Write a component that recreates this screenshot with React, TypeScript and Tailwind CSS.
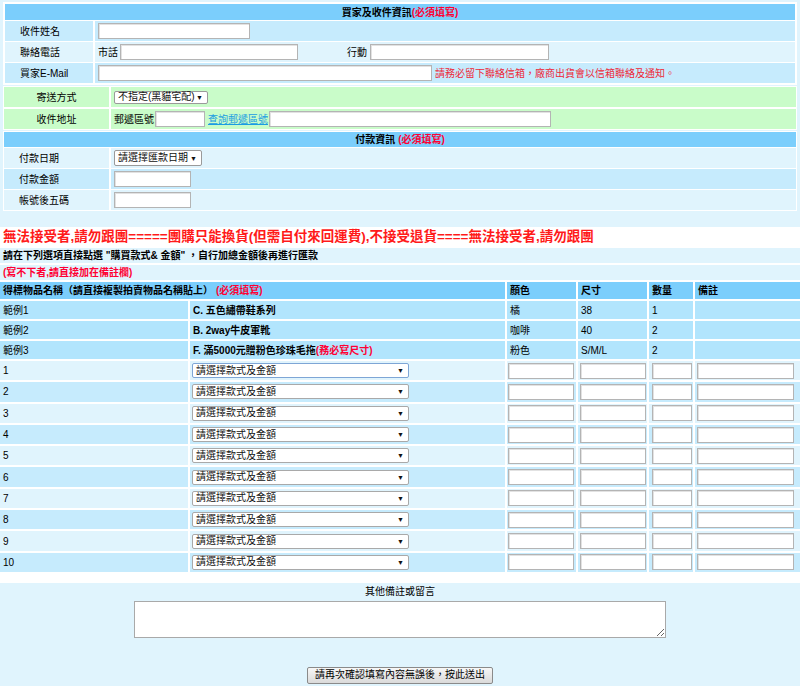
import clsx from 'clsx'
import type { ReactNode } from 'react'

const RED = 'text-[#ff0033]'

function Field({ className }: { className?: string }) {
  return (
    <input
      type="text"
      className={clsx('h-[16px] border border-[#b4b4b4] bg-white shadow-[inset_1px_1px_0_#e2e2e2] outline-none', className)}
    />
  )
}

function Pick({ label, className }: { label: string; className?: string }) {
  return (
    <div
      className={clsx(
        'flex items-center justify-between rounded-[2px] border bg-white pl-[3px] pr-[4px] text-[10px] leading-none text-[#111]',
        className,
      )}
    >
      <span>{label}</span>
      <span className="text-[7px]">▼</span>
    </div>
  )
}

function Row({
  label,
  dark,
  wide,
  center,
  green,
  children,
}: {
  label: string
  dark?: boolean
  wide?: boolean
  center?: boolean
  green?: boolean
  children?: ReactNode
}) {
  const bg = green ? 'bg-[#c9fcc9]' : dark ? 'bg-[#c6ebfd]' : 'bg-[#e0f4fd]'
  return (
    <div className={clsx('grid h-[20px] gap-x-[2px]', wide ? 'grid-cols-[105px_1fr]' : 'grid-cols-[88px_1fr]')}>
      <div className={clsx('flex items-center', bg, center ? 'justify-center' : 'pl-[15px]')}>{label}</div>
      <div className={clsx('flex items-center pl-[3px]', bg)}>{children}</div>
    </div>
  )
}

const examples = [
  { no: '範例1', name: 'C. 五色繡帶鞋系列', color: '橘', size: '38', qty: '1' },
  { no: '範例2', name: 'B. 2way牛皮軍靴', color: '咖啡', size: '40', qty: '2' },
  { no: '範例3', name: 'F. 滿5000元贈粉色珍珠毛拖', color: '粉色', size: 'S/M/L', qty: '2', warn: '(務必寫尺寸)' },
]

export default function App() {
  return (
    <div className="min-h-[686px] bg-white font-['Liberation_Sans','Noto_Sans_CJK_TC',sans-serif] text-[10px] text-black">
      {/* buyer / shipping / payment */}
      <div className="bg-[#e0f4fd] px-[3px] pb-[16px] pt-[2px]">
        <div className="flex flex-col gap-[1px] bg-white p-[2px]">
          <div className="flex h-[16px] items-center justify-center bg-[#7bcefc] font-bold">
            買家及收件資訊<span className={RED}>(必須填寫)</span>
          </div>
          <Row label="收件姓名" dark>
            <Field className="w-[152px]" />
          </Row>
          <Row label="聯絡電話">
            <span>市話</span>
            <Field className="ml-[2px] w-[178px]" />
            <span className="ml-[49px]">行動</span>
            <Field className="ml-[3px] w-[179px]" />
          </Row>
          <Row label="買家E-Mail" dark>
            <Field className="w-[334px]" />
            <span className="ml-[3px] text-[#ee2838]">請務必留下聯絡信箱，廠商出貨會以信箱聯絡及通知。</span>
          </Row>
        </div>

        <div className="mt-[1px] flex flex-col gap-[2px] bg-white p-[1px]">
          <Row label="寄送方式" wide center green>
            <Pick label="不指定(黑貓宅配)" className="h-[13px] w-[94px] border-[#9a9a9a]" />
          </Row>
          <Row label="收件地址" wide center green>
            <span>郵遞區號</span>
            <Field className="ml-[1px] w-[50px]" />
            <a href="#" className="ml-[3px] text-[#1b9ce2] underline">
              查詢郵遞區號
            </a>
            <Field className="ml-[1px] w-[282px]" />
          </Row>
        </div>

        <div className="mt-[1px] flex flex-col gap-[1px] bg-white p-[1px]">
          <div className="flex h-[15px] items-center justify-center bg-[#7bcefc] font-bold">
            付款資訊 <span className={clsx('ml-[3px]', RED)}>(必須填寫)</span>
          </div>
          <Row label="付款日期" wide>
            <Pick label="請選擇匯款日期" className="h-[16px] w-[88px] border-[#9a9a9a]" />
          </Row>
          <Row label="付款金額" wide dark>
            <Field className="w-[77px]" />
          </Row>
          <Row label="帳號後五碼" wide>
            <Field className="w-[77px]" />
          </Row>
        </div>
      </div>

      {/* notice */}
      <div className="flex h-[21px] items-center pl-[3px] text-[13.5px] font-bold text-[#ff1a1a]">
        無法接受者,請勿跟團=====團購只能換貨(但需自付來回運費),不接受退貨====無法接受者,請勿跟團
      </div>

      {/* items */}
      <div className="flex flex-col gap-[2px] bg-white">
        <div className="flex h-[15px] items-center bg-[#e0f4fd] pl-[3px] font-bold">
          請在下列選項直接點選 "購買款式&amp; 金額" ，自行加總金額後再進行匯款
        </div>
        <div className={clsx('flex h-[15px] items-center bg-[#e0f4fd] pl-[3px] font-bold', RED)}>
          (寫不下者,請直接加在備註欄)
        </div>
        <div className="grid grid-cols-[188px_315px_69px_69px_44px_1fr] gap-[2px]">
          <div className="col-span-2 flex h-[17px] items-center bg-[#7bcefc] pl-[3px] font-bold">
            得標物品名稱（請直接複製拍賣物品名稱貼上）<span className={clsx('ml-[3px]', RED)}>(必須填寫)</span>
          </div>
          {['顏色', '尺寸', '數量', '備註'].map((h) => (
            <div key={h} className="flex h-[17px] items-center bg-[#7bcefc] pl-[3px] font-bold">
              {h}
            </div>
          ))}

          {examples.map((e) => (
            <div key={e.no} className="contents">
              <div className="flex h-[18px] items-center bg-[#b2e5fd] pl-[3px]">{e.no}</div>
              <div className="flex h-[18px] items-center bg-[#b2e5fd] pl-[3px] font-bold">
                {e.name}
                {e.warn && <span className={RED}>{e.warn}</span>}
              </div>
              <div className="flex h-[18px] items-center bg-[#b2e5fd] pl-[3px]">{e.color}</div>
              <div className="flex h-[18px] items-center bg-[#b2e5fd] pl-[3px]">{e.size}</div>
              <div className="flex h-[18px] items-center bg-[#b2e5fd] pl-[3px]">{e.qty}</div>
              <div className="h-[18px] bg-[#b2e5fd]" />
            </div>
          ))}

          {Array.from({ length: 10 }, (_, i) => {
            const bg = i % 2 === 0 ? 'bg-[#e0f4fd]' : 'bg-[#c6ebfd]'
            return (
              <div key={i} className="contents">
                <div className={clsx('flex h-[19.3px] items-center pl-[3px]', bg)}>{i + 1}</div>
                <div className={clsx('flex h-[19.3px] items-center pl-[2px]', bg)}>
                  <Pick
                    label="請選擇款式及金額"
                    className={clsx('h-[15px] w-[217px]', i === 0 ? 'border-[#7ea6d6]' : 'border-[#a9a9a9]')}
                  />
                </div>
                <div className={clsx('flex h-[19.3px] items-center pl-[1px]', bg)}>
                  <Field className="w-[66px]" />
                </div>
                <div className={clsx('flex h-[19.3px] items-center pl-[2px]', bg)}>
                  <Field className="w-[66px]" />
                </div>
                <div className={clsx('flex h-[19.3px] items-center pl-[3px]', bg)}>
                  <Field className="w-[40px]" />
                </div>
                <div className={clsx('flex h-[19.3px] items-center pl-[2px]', bg)}>
                  <Field className="w-[97px]" />
                </div>
              </div>
            )
          })}
        </div>
      </div>

      {/* remarks + submit */}
      <div className="mt-[11px] flex flex-col items-center bg-[#e0f4fd] pb-[4px] pt-[2px]">
        <div className="leading-[14px]">其他備註或留言</div>
        <textarea className="mt-[2px] h-[37px] w-[532px] border border-[#a9a9a9] bg-white outline-none" />
        <button
          type="button"
          className="mt-[29px] h-[17px] rounded-[2px] border border-[#8a8a8a] bg-gradient-to-b from-[#f7f7f7] to-[#dadada] px-[7px] text-[10px] leading-none text-black"
        >
          請再次確認填寫內容無誤後，按此送出
        </button>
      </div>
    </div>
  )
}
